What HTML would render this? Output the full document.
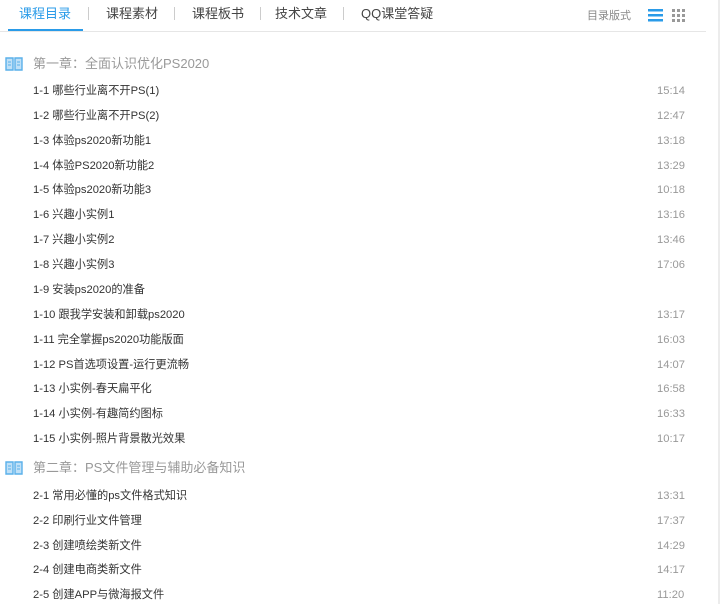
<!DOCTYPE html>
<html><head><meta charset="utf-8"><style>
*{margin:0;padding:0;box-sizing:border-box}
body{width:720px;height:604px;background:#fff;font-family:"Liberation Sans","Noto Sans CJK SC",sans-serif;position:relative;overflow:hidden}
.tab{position:absolute;top:5px;font-size:13px;color:#444;line-height:18px}
.sep{position:absolute;top:7px;width:1px;height:13px;background:#ccc}
.hl{position:absolute;left:0;top:31px;width:706px;height:1px;background:#e6e6e6}
.ul{position:absolute;left:8px;top:29px;width:75px;height:2px;background:#2a9be8}
.ch{position:absolute;left:33px;font-size:13px;color:#999;line-height:16px}
.ico{position:absolute;left:5px;width:18px;height:16px}
.it{position:absolute;left:33px;font-size:11.2px;color:#333;line-height:14px}
.tm{position:absolute;left:657px;font-size:11.2px;color:#999;line-height:14px}
.edge{position:absolute;right:0;top:0;width:2px;height:604px;background:#ececec}
</style></head><body>
<div class="tab" style="left:19px;color:#2a9be8">课程目录</div>
<div class="sep" style="left:88px"></div>
<div class="tab" style="left:106px">课程素材</div>
<div class="sep" style="left:174px"></div>
<div class="tab" style="left:192px">课程板书</div>
<div class="sep" style="left:260px"></div>
<div class="tab" style="left:275px">技术文章</div>
<div class="sep" style="left:343px"></div>
<div class="tab" style="left:361px">QQ课堂答疑</div>
<div class="tab" style="left:587px;font-size:11px;color:#888;top:7px">目录版式</div>
<svg style="position:absolute;left:648px;top:9px" width="15" height="13"><rect x="0" y="0" width="15" height="2.5" fill="#2a9be8"/><rect x="0" y="5" width="15" height="2.5" fill="#2a9be8"/><rect x="0" y="10" width="15" height="2.5" fill="#2a9be8"/></svg>
<svg style="position:absolute;left:672px;top:9px" width="13" height="13" fill="#999"><rect x="0" y="0" width="3" height="3"/><rect x="5" y="0" width="3" height="3"/><rect x="10" y="0" width="3" height="3"/><rect x="0" y="5" width="3" height="3"/><rect x="5" y="5" width="3" height="3"/><rect x="10" y="5" width="3" height="3"/><rect x="0" y="10" width="3" height="3"/><rect x="5" y="10" width="3" height="3"/><rect x="10" y="10" width="3" height="3"/></svg>
<div class="ul"></div><div class="hl"></div>
<div class="edge"></div>

<svg class="ico" style="top:56px" viewBox="0 0 18 16"><path d="M1 2h7v12H1zM10 2h7v12h-7z" fill="#bfe0f7" stroke="#5ab0ea" stroke-width="1.4"/><path d="M3 6h3M3 9h3M12 6h3M12 9h3" stroke="#5ab0ea"/></svg>
<div class="ch" style="top:56px">第一章：全面认识优化PS2020</div>

<div class="it" style="top:84px">1-1 哪些行业离不开PS(1)</div><div class="tm" style="top:84px">15:14</div>
<div class="it" style="top:109px">1-2 哪些行业离不开PS(2)</div><div class="tm" style="top:109px">12:47</div>
<div class="it" style="top:134px">1-3 体验ps2020新功能1</div><div class="tm" style="top:134px">13:18</div>
<div class="it" style="top:159px">1-4 体验PS2020新功能2</div><div class="tm" style="top:159px">13:29</div>
<div class="it" style="top:183px">1-5 体验ps2020新功能3</div><div class="tm" style="top:183px">10:18</div>
<div class="it" style="top:208px">1-6 兴趣小实例1</div><div class="tm" style="top:208px">13:16</div>
<div class="it" style="top:233px">1-7 兴趣小实例2</div><div class="tm" style="top:233px">13:46</div>
<div class="it" style="top:258px">1-8 兴趣小实例3</div><div class="tm" style="top:258px">17:06</div>
<div class="it" style="top:283px">1-9 安装ps2020的准备</div>
<div class="it" style="top:308px">1-10 跟我学安装和卸载ps2020</div><div class="tm" style="top:308px">13:17</div>
<div class="it" style="top:333px">1-11 完全掌握ps2020功能版面</div><div class="tm" style="top:333px">16:03</div>
<div class="it" style="top:358px">1-12 PS首选项设置-运行更流畅</div><div class="tm" style="top:358px">14:07</div>
<div class="it" style="top:382px">1-13 小实例-春天扁平化</div><div class="tm" style="top:382px">16:58</div>
<div class="it" style="top:407px">1-14 小实例-有趣简约图标</div><div class="tm" style="top:407px">16:33</div>
<div class="it" style="top:432px">1-15 小实例-照片背景散光效果</div><div class="tm" style="top:432px">10:17</div>

<svg class="ico" style="top:460px" viewBox="0 0 18 16"><path d="M1 2h7v12H1zM10 2h7v12h-7z" fill="#bfe0f7" stroke="#5ab0ea" stroke-width="1.4"/><path d="M3 6h3M3 9h3M12 6h3M12 9h3" stroke="#5ab0ea"/></svg>
<div class="ch" style="top:460px">第二章：PS文件管理与辅助必备知识</div>

<div class="it" style="top:489px">2-1 常用必懂的ps文件格式知识</div><div class="tm" style="top:489px">13:31</div>
<div class="it" style="top:514px">2-2 印刷行业文件管理</div><div class="tm" style="top:514px">17:37</div>
<div class="it" style="top:539px">2-3 创建喷绘类新文件</div><div class="tm" style="top:539px">14:29</div>
<div class="it" style="top:563px">2-4 创建电商类新文件</div><div class="tm" style="top:563px">14:17</div>
<div class="it" style="top:588px">2-5 创建APP与微海报文件</div><div class="tm" style="top:588px">11:20</div>
</body></html>
